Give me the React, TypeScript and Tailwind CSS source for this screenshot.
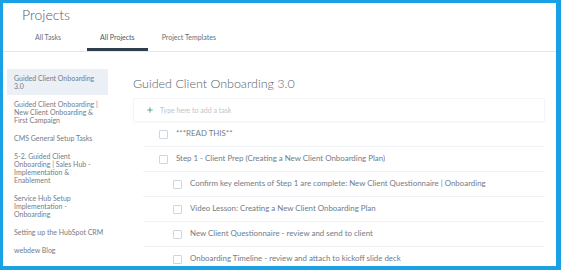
import { Plus } from "lucide-react"

const projects = [
  { lines: ["Guided Client Onboarding", "3.0"], active: true },
  { lines: ["Guided Client Onboarding |", "New Client Onboarding &", "First Campaign"] },
  { lines: ["CMS General Setup Tasks"] },
  { lines: ["5-2. Guided Client", "Onboarding | Sales Hub -", "Implementation &", "Enablement"] },
  { lines: ["Service Hub Setup", "Implementation -", "Onboarding"] },
  { lines: ["Setting up the HubSpot CRM"] },
  { lines: ["webdew Blog"] },
]

const tasks = [
  { title: "***READ THIS**", level: 1 },
  { title: "Step 1 - Client Prep (Creating a New Client Onboarding Plan)", level: 1 },
  { title: "Confirm key elements of Step 1 are complete: New Client Questionnaire | Onboarding Timeline", level: 2 },
  { title: "Video Lesson: Creating a New Client Onboarding Plan", level: 2 },
  { title: "New Client Questionnaire - review and send to client", level: 2 },
  { title: "Onboarding Timeline - review and attach to kickoff slide deck", level: 2 },
]

export default function App() {
  return (
    <div
      className="w-[561px] h-[270px] overflow-hidden bg-[#1aa0e4] pl-[3px] pt-[3px] pr-[5px] pb-[4px]"
      style={{ fontFamily: "Lato, 'Open Sans', sans-serif" }}
    >
      <div className="h-full bg-white flex flex-col overflow-hidden">
        {/* Header */}
        <div className="border-b border-[#e3e8ee]">
          <h1 className="pl-[19px] pt-[3px] text-[14px] leading-[17px] font-light text-[#4d5b69]">Projects</h1>
          <div className="flex pl-[19px] mt-[10px]">
            <div className="px-[13px] pb-[6px] text-[7px] leading-[9px] text-[#66727e] border-b-[3px] border-transparent">All Tasks</div>
            <div className="ml-[13px] px-[13px] pb-[6px] text-[7px] leading-[9px] text-[#4d5a67] border-b-[3px] border-[#2f3e4d]">All Projects</div>
            <div className="ml-[1px] px-[13px] pb-[6px] text-[7px] leading-[9px] text-[#66727e] border-b-[3px] border-transparent">Project Templates</div>
          </div>
        </div>

        <div className="flex flex-1 min-h-0">
          {/* Sidebar */}
          <div className="w-[130px] shrink-0 pt-[17px] pl-[4px]">
            {projects.map((p) => (
              <div
                key={p.lines.join(" ")}
                className={`w-[101px] pl-[7px] py-[5px] text-[7px] leading-[8px] text-[#727d89] ${p.active ? "bg-[#eaf0f6]" : ""}`}
              >
                {p.lines.map((l) => (
                  <div key={l} className="whitespace-nowrap">{l}</div>
                ))}
              </div>
            ))}
          </div>

          {/* Main */}
          <div className="flex-1 min-w-0 pt-[24px] pr-[11px]">
            <h2 className="text-[12.5px] leading-[16px] font-light text-[#56636f]">Guided Client Onboarding 3.0</h2>
            <div className="mt-[6px] h-[24px] flex items-center pl-[12px] border border-[#f3f5f7] shadow-[0_1px_2px_rgba(0,0,0,0.03)]">
              <Plus className="w-[8px] h-[8px] text-[#3a9c80]" strokeWidth={2.5} />
              <span className="ml-[6px] text-[7px] text-[#bcc5ce]">Type here to add a task</span>
            </div>
            <div className="ml-[10px]">
              {tasks.map((t) => (
                <div
                  key={t.title}
                  className={`h-[25px] flex items-center pr-[58px] border-b border-[#f0f2f5] ${t.level === 1 ? "pl-[16px]" : "pl-[30px]"}`}
                >
                  <div className="w-[9px] h-[9px] shrink-0 border border-[#cfd6de] rounded-[1px] bg-white" />
                  <span className="ml-[8px] min-w-0 text-[7.9px] text-[#707c88] whitespace-nowrap overflow-hidden">{t.title}</span>
                </div>
              ))}
            </div>
          </div>
        </div>
      </div>
    </div>
  )
}
